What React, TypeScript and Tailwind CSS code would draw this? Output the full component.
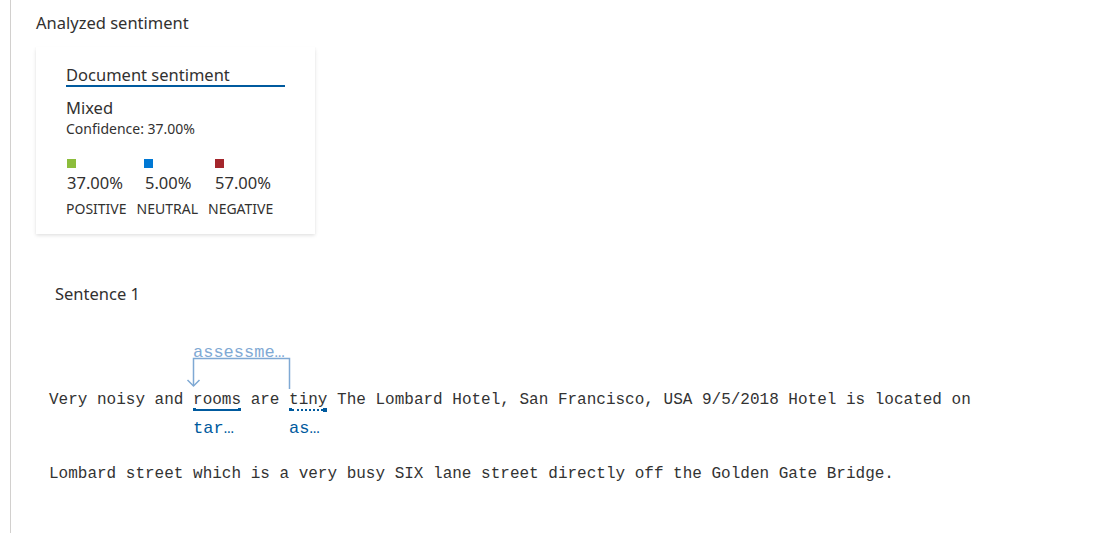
import React from "react";

const sans = "font-['Segoe_UI','Noto_Sans','Open_Sans',sans-serif]";
const mono = "font-['Liberation_Mono','DejaVu_Sans_Mono',monospace]";

function Word({
  text,
  label,
  dotted,
}: {
  text: string;
  label: string;
  dotted?: boolean;
}) {
  return (
    <span className="relative inline-block">
      {text}
      <span className="absolute left-0 right-0 top-[18px] h-[3px]">
        <span className="absolute left-0 top-0 h-[3px] w-[3px] bg-[#005a9e]" />
        {dotted ? (
          <span className="absolute left-[3px] right-[4px] top-[1px] h-0 border-t-[2px] border-dotted border-[#005a9e]" />
        ) : (
          <span className="absolute left-[3px] right-[3px] top-[1px] h-[2px] bg-[#005a9e]" />
        )}
        <span
          className={
            dotted
              ? "absolute right-0 top-[-0.5px] h-[4px] w-[4px] bg-[#005a9e]"
              : "absolute right-0 top-0 h-[3px] w-[3px] bg-[#005a9e]"
          }
        />
      </span>
      <span className="absolute left-0 top-[30px] whitespace-nowrap text-[17px] leading-[17px] text-[#005a9e]">
        {label}
      </span>
    </span>
  );
}

export default function App() {
  return (
    <div className="min-h-[533px] w-full bg-white">
      <div className="ml-[10px] min-h-[533px] border-l border-[#d2d0ce] pl-[25px] pt-[10px] text-[#323130]">
        <div className={`${sans} text-[16.5px] leading-[26px]`}>Analyzed sentiment</div>

        <div className="mt-[11px] w-[279px] bg-white px-[30px] pb-[16px] pt-[17px] shadow-[0_1.6px_3.6px_rgba(0,0,0,0.13),0_0.3px_0.9px_rgba(0,0,0,0.11)]">
          <div className={`${sans} border-b-2 border-[#005a9e] text-[16.5px] leading-[21px]`}>
            Document sentiment
          </div>
          <div className={`${sans} mt-[10px] text-[16.5px] leading-[22px]`}>Mixed</div>
          <div className={`${sans} mt-[1px] text-[14px] leading-[18px]`}>Confidence: 37.00%</div>

          <div className={`${sans} mt-[21px] flex`}>
            <div className="w-[78px] pl-[1px]">
              <div className="h-[9px] w-[9px] bg-[#8cbd3c]" />
              <div className="mt-[4px] text-[16.5px] leading-[22px]">37.00%</div>
            </div>
            <div className="w-[71px]">
              <div className="h-[9px] w-[9px] bg-[#0078d4]" />
              <div className="mt-[4px] pl-[1px] text-[16.5px] leading-[22px]">5.00%</div>
            </div>
            <div>
              <div className="h-[9px] w-[9px] bg-[#a4262c]" />
              <div className="mt-[4px] text-[16.5px] leading-[22px]">57.00%</div>
            </div>
          </div>
          <div className={`${sans} mt-[6px] flex gap-[10px] text-[14px] leading-[18px]`}>
            <span>POSITIVE</span>
            <span>NEUTRAL</span>
            <span>NEGATIVE</span>
          </div>
        </div>

        <div className={`${sans} ml-[19px] mt-[49px] text-[16.5px] leading-[22px]`}>Sentence 1</div>

        <div className={`${mono} ml-[13px] text-[16px] text-[#333333]`}>
          <div className="relative mt-[30px] pb-[54px] pt-[55px]">
            <span className="absolute left-[144px] top-[9px] whitespace-nowrap text-[17px] leading-[17px] text-[#7fa9d4]">
              assessme…
            </span>
            <svg
              className="absolute left-0 top-0"
              width="260"
              height="60"
              viewBox="0 0 260 60"
              fill="none"
            >
              <path d="M144.5 51 V23.5 H240.5 V54" stroke="#7fa9d4" strokeWidth="1.5" />
              <path d="M138.5 45 L144.5 51 L150.5 45" stroke="#7fa9d4" strokeWidth="1.5" />
            </svg>
            <div className="whitespace-pre leading-[20px]">
              {"Very noisy and "}
              <Word text="rooms" label="tar…" />
              {" are "}
              <Word text="tiny" label="as…" dotted />
              {" The Lombard Hotel, San Francisco, USA 9/5/2018 Hotel is located on"}
            </div>
          </div>
          <div className="whitespace-pre leading-[20px]">
            Lombard street which is a very busy SIX lane street directly off the Golden Gate Bridge.
          </div>
        </div>
      </div>
    </div>
  );
}
